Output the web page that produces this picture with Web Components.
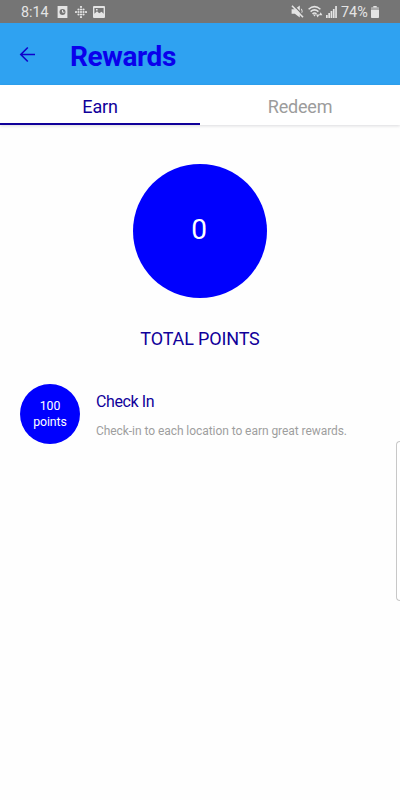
<!DOCTYPE html>
<html lang="en">
<head>
<meta charset="utf-8">
<meta name="viewport" content="width=device-width, initial-scale=1">
<title>Rewards</title>
<style>
  body {
    margin: 0;
    font-family: Roboto, "Liberation Sans", sans-serif;
    background: #fefefe;
  }
</style>
</head>
<body>
<rewards-screen></rewards-screen>

<script>
/**
 * Base class: renders the template of the subclass into an open shadow root
 */
class BaseElement extends HTMLElement {
  connectedCallback() {
    if (!this.shadowRoot) {
      this.attachShadow({ mode: 'open' });
    }
    this.shadowRoot.innerHTML = this.template();
  }
}

/**
 * <status-bar time="8:14" battery="74%">
 */
class StatusBar extends BaseElement {
  template() {
    // Diamond of dots, one row at a time: [y, x positions]
    const rows = [
      [1, [6]],
      [3.5, [3.5, 6, 8.5]],
      [6, [1, 3.5, 6, 8.5, 11]],
      [8.5, [3.5, 6, 8.5]],
      [11, [6]]
    ];
    const dots = rows.map(([y, xs]) =>
      xs.map(x => `<circle cx="${x}" cy="${y}" r="1.1"/>`).join('')
    ).join('');

    return `
      <style>
        :host {
          display: flex;
          justify-content: space-between;
          box-sizing: border-box;
          height: 23px;
          padding: 0 21px;
          background: #757575;
          color: #e4e4e4;
          font-size: 14px;
          line-height: 24px;
        }
        .group { display: flex; align-items: center; }
        .time { width: 36px; font-size: 14.3px; }
        .battery { margin-left: 4px; width: 30px; font-size: 14.4px; line-height: 26px; }
        span { height: 23px; white-space: nowrap; }
        svg { display: block; fill: currentColor; }
      </style>
      <div class="group">
        <span class="time">${this.getAttribute('time')}</span>
        <svg width="11" height="12" viewBox="0 0 11 12">
          <path fill-rule="evenodd" d="M.6 0h9.8v12H.6zM5.5 3a3 3 0 1 0 0 6a3 3 0 0 0 0-6z"/>
          <path d="M5.5 4v2.2H7.4" fill="none" stroke="currentColor"/>
        </svg>
        <svg width="12" height="12" viewBox="0 0 12 12" style="margin-left:7px">${dots}</svg>
        <svg width="12" height="12" viewBox="0 0 12 12" style="margin-left:6px">
          <path fill-rule="evenodd" d="M1 0h10a1 1 0 0 1 1 1v10a1 1 0 0 1-1 1H1a1 1 0 0 1-1-1V1a1 1 0 0 1 1-1zM1.4 2v5.7L4 5.3l2.2 2 2.4-1.6 2 2V2zM3 3h1.6v1.6H3z"/>
        </svg>
      </div>
      <div class="group">
        <svg width="13" height="13" viewBox="0 0 13 13">
          <path d="M.6 4.2h3.2L8.8.6v11.8L3.8 8.8H.6z"/>
          <path d="M10.4 3.8q1.6 2.6 0 4.6" fill="none" stroke="currentColor"/>
          <path d="M2.6.2l10.2 10.8" stroke="#757575" stroke-width="1.3"/>
          <path d="M1 .8l11 11.4" stroke="currentColor" stroke-width="1.6"/>
        </svg>
        <svg width="15" height="13" viewBox="0 0 15 13" style="margin-left:4px">
          <g fill="none" stroke="currentColor" stroke-width="1.5">
            <path d="M.6 4.2q5.9-5.2 11.8 0"/>
            <path d="M2.6 6.6q3.9-3.4 7.8 0"/>
            <path d="M4.5 8.9q2-1.8 4 0"/>
          </g>
          <path d="M5 9.5h3l-1.5 2z"/>
          <path d="M8 9.6l1.7 2.9 1.7-2.9zM11 10.2l1.7-2.9 1.7 2.9z"/>
        </svg>
        <svg width="11" height="12" viewBox="0 0 11 12" style="margin-left:3px">
          <path d="M0 9h1.7v3H0zM2.3 7H4v5H2.3zM4.6 5h1.7v7H4.6zM6.9 3h1.7v9H6.9zM9.2 0h1.7v12H9.2z"/>
        </svg>
        <span class="battery">${this.getAttribute('battery')}</span>
        <svg width="8" height="12" viewBox="0 0 8 12">
          <path d="M2.3 0h3.4v1.5h1.5a.8.8 0 0 1 .8.8v8.9a.8.8 0 0 1-.8.8H.8a.8.8 0 0 1-.8-.8V2.3a.8.8 0 0 1 .8-.8h1.5z"/>
          <path d="M0 2.2a.7.7 0 0 1 .7-.7h6.6a.7.7 0 0 1 .7.7V4H0z" fill="#aaa"/>
        </svg>
      </div>
    `;
  }
}

/**
 * <app-header>: back arrow with the slotted page title
 */
class AppHeader extends BaseElement {
  template() {
    return `
      <style>
        :host {
          display: flex;
          align-items: center;
          box-sizing: border-box;
          height: 62px;
          padding-left: 19px;
          gap: 34px;
          background: #2fa2f1;
          color: #0a00ec;
        }
        svg { display: block; }
        h1 {
          margin: 5px 0 0;
          font-size: 28px;
          line-height: 33px;
          font-weight: 700;
          letter-spacing: -0.4px;
        }
      </style>
      <svg width="17" height="17" viewBox="0 0 17 17" fill="none" stroke="#1000cb" stroke-width="1.6">
        <path d="M16 8.5H2M8.8 1.5l-7 7 7 7"/>
      </svg>
      <h1><slot></slot></h1>
    `;
  }
}

/**
 * <tab-item active>: one tab, underlined when active
 */
class TabItem extends BaseElement {
  template() {
    return `
      <style>
        :host {
          display: block;
          box-sizing: border-box;
          flex: 1;
          height: 40px;
          padding-top: 2px;
          border-bottom: 2px solid transparent;
          color: #9c9c9c;
          font-size: 18px;
          line-height: 40px;
          letter-spacing: -0.2px;
          text-align: center;
        }
        :host([active]) {
          border-bottom-color: #10009a;
          color: #10009a;
        }
      </style>
      <slot></slot>
    `;
  }
}

class TabBar extends BaseElement {
  template() {
    return `
      <style>
        :host {
          display: flex;
          height: 40px;
          background: #fff;
          box-shadow: 0 1px 3px rgba(0, 0, 30, 0.14);
        }
      </style>
      <slot></slot>
    `;
  }
}

/**
 * <points-total value="0">: big circle with its slotted caption
 */
class PointsTotal extends BaseElement {
  template() {
    return `
      <style>
        :host {
          display: flex;
          flex-direction: column;
          align-items: center;
          padding-top: 39px;
        }
        .circle {
          box-sizing: border-box;
          width: 134px;
          height: 134px;
          padding-right: 2px;
          border-radius: 50%;
          background: #0000fe;
          color: #fff;
          font-size: 28px;
          line-height: 131px;
          text-align: center;
        }
        .caption {
          margin-top: 30px;
          color: #10009a;
          font-size: 18px;
          line-height: 22px;
          letter-spacing: -0.15px;
        }
      </style>
      <div class="circle">${this.getAttribute('value')}</div>
      <div class="caption"><slot></slot></div>
    `;
  }
}

/**
 * <reward-item points="100" heading="...">: badge, heading and slotted text
 */
class RewardItem extends BaseElement {
  template() {
    return `
      <style>
        :host {
          display: flex;
          gap: 16px;
          padding: 34px 20px 0;
        }
        .badge {
          display: flex;
          flex-direction: column;
          align-items: center;
          justify-content: center;
          flex: none;
          width: 60px;
          height: 60px;
          border-radius: 50%;
          background: #0000fe;
          color: #fff;
          font-size: 12.3px;
          line-height: 16px;
          letter-spacing: -0.1px;
        }
        h2 {
          margin: 8px 0 0;
          color: #10009a;
          font-size: 16px;
          font-weight: 400;
          line-height: 20px;
          letter-spacing: -0.4px;
        }
        p {
          margin: 11px 0 0;
          color: #9e9e9e;
          font-size: 12px;
          line-height: 16px;
          letter-spacing: -0.06px;
          white-space: nowrap;
        }
      </style>
      <div class="badge">
        <span>${this.getAttribute('points')}</span>
        <span>points</span>
      </div>
      <div>
        <h2>${this.getAttribute('heading')}</h2>
        <p><slot></slot></p>
      </div>
    `;
  }
}

/**
 * <edge-handle>: panel handle that sticks out of the right screen edge
 */
class EdgeHandle extends BaseElement {
  template() {
    return `
      <style>
        :host {
          position: absolute;
          top: 441px;
          right: 0;
          box-sizing: border-box;
          width: 4px;
          height: 160px;
          border: 1px solid #c8c8c8;
          border-right: 0;
          border-radius: 4px 0 0 4px;
          background: #fff;
        }
      </style>
    `;
  }
}

class RewardsScreen extends BaseElement {
  template() {
    return `
      <style>
        :host {
          display: block;
          position: relative;
          height: 800px;
          overflow: hidden;
        }
      </style>
      <status-bar time="8:14" battery="74%"></status-bar>
      <app-header>Rewards</app-header>
      <tab-bar>
        <tab-item active>Earn</tab-item>
        <tab-item>Redeem</tab-item>
      </tab-bar>
      <points-total value="0">TOTAL POINTS</points-total>
      <reward-item points="100" heading="Check In">Check-in to each location to earn great rewards.</reward-item>
      <edge-handle></edge-handle>
    `;
  }
}

customElements.define('status-bar', StatusBar);
customElements.define('app-header', AppHeader);
customElements.define('tab-item', TabItem);
customElements.define('tab-bar', TabBar);
customElements.define('points-total', PointsTotal);
customElements.define('reward-item', RewardItem);
customElements.define('edge-handle', EdgeHandle);
customElements.define('rewards-screen', RewardsScreen);
</script>
</body>
</html>
